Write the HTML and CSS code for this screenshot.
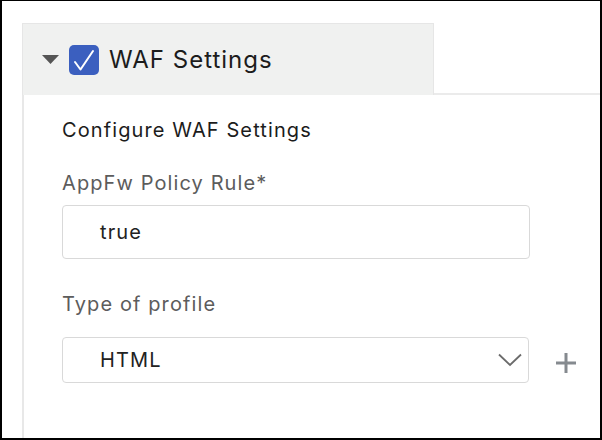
FILE: index.html
```html
<!DOCTYPE html>
<html lang="en">
<head>
  <meta charset="UTF-8">
  <meta name="viewport" content="width=device-width, initial-scale=1.0">
  <title>WAF Settings</title>
  <link rel="stylesheet" href="styles.css">
</head>
<body>
  <div class="frame">
    <div class="tabrow">
      <div class="tab">
        <svg class="caret" width="17" height="9" viewBox="0 0 17 9">
          <polygon points="0,0 17,0 8.5,9" fill="#555"></polygon>
        </svg>
        <span class="checkbox">
          <svg width="30" height="30" viewBox="0 0 30 30">
            <path d="M6 17 L11.5 24.5 L24 6" fill="none" stroke="#fff" stroke-width="2" stroke-linecap="round" stroke-linejoin="round"></path>
          </svg>
        </span>
        <span class="tab-title">WAF Settings</span>
      </div>
      <div class="tabrest"></div>
    </div>
    <div class="panel">
      <div class="intro">Configure WAF Settings</div>
      <div class="label label-first">AppFw Policy Rule*</div>
      <div class="field field-input">true</div>
      <div class="label label-second">Type of profile</div>
      <div class="select-row">
        <div class="field field-select">
          <span>HTML</span>
          <svg class="chevron" width="24" height="14" viewBox="0 0 24 14">
            <path d="M1 1.5 L12 12 L23 1.5" fill="none" stroke="#6b6b6b" stroke-width="1.8"></path>
          </svg>
        </div>
        <svg class="plus" width="20" height="20" viewBox="0 0 20 20">
          <path d="M10 0 V20 M0 10 H20" stroke="#858a8f" stroke-width="3"></path>
        </svg>
      </div>
    </div>
  </div>
</body>
</html>
```

FILE: styles.css
```css
body {
  margin: 0;
  background: #fff;
  font-family: 'Inter', 'Liberation Sans', sans-serif;
}

.frame {
  width: 602px;
  height: 440px;
  box-sizing: border-box;
  border: 2px solid #000;
  border-top-width: 1px;
  padding: 22px 0 0 20px;
  display: flex;
  flex-direction: column;
}

.tabrow {
  display: flex;
  height: 72px;
}

.tab {
  width: 412px;
  box-sizing: border-box;
  background: #f0f1f0;
  border: 1px solid #e6e6e6;
  border-bottom: none;
  display: flex;
  align-items: center;
  padding-left: 19px;
}

.caret {
  margin-right: 10px;
}

.checkbox {
  width: 30px;
  height: 30px;
  background: #3b5fbf;
  border-radius: 5px;
  display: flex;
  margin-right: 10px;
}

.tab-title {
  font-size: 24px;
  color: #1c1c1c;
  line-height: 30px;
  letter-spacing: 1px;
}

.tabrest {
  flex: 1;
  border-bottom: 2px solid #ebebeb;
}

.panel {
  flex: 1;
  border-left: 2px solid #e8e8e8;
  padding: 23px 0 0 38px;
}

.intro {
  font-size: 20px;
  line-height: 24px;
  color: #1c1c1c;
  letter-spacing: 1.1px;
}

.label {
  font-size: 20px;
  line-height: 24px;
  color: #5c5c5c;
  letter-spacing: 1.1px;
}

.label-first {
  margin-top: 29px;
  margin-bottom: 10px;
}

.label-second {
  margin-top: 33px;
  margin-bottom: 21px;
}

.field {
  width: 468px;
  box-sizing: border-box;
  border: 1px solid #d9d9d9;
  border-radius: 4px;
  font-size: 20px;
  letter-spacing: 1.1px;
  color: #222;
  padding-left: 37px;
  display: flex;
  align-items: center;
}

.field-input {
  height: 54px;
}

.select-row {
  display: flex;
  align-items: center;
}

.field-select {
  width: 467px;
  height: 46px;
  justify-content: space-between;
  padding-right: 6px;
}

.plus {
  margin-left: 27px;
  margin-top: 6px;
}
```
